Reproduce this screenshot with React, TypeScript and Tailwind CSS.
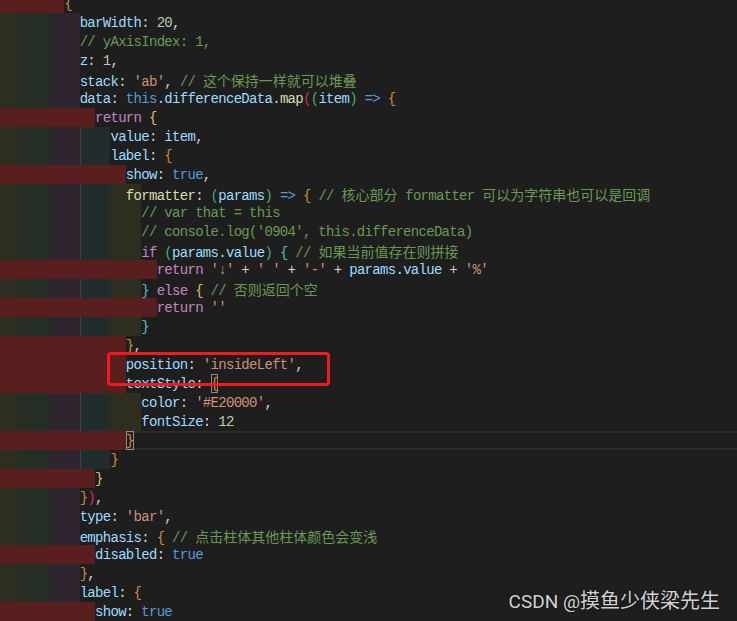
import React from "react";

type Tok = [string, string, boolean?];

const COL: Record<string, string> = {
  k: "text-[#9cdcfe]",
  p: "text-[#d4d4d4]",
  n: "text-[#b5cea8]",
  s: "text-[#ce9178]",
  c: "text-[#6a9955]",
  b: "text-[#569cd6]",
  f: "text-[#dcdcaa]",
  kw: "text-[#c586c0]",
  o: "text-[#d18b3a]",
  y: "text-[#e2c05b]",
  t: "text-[#4ec1c7]",
  g: "text-[#3db06b]",
  r: "text-[#d42a5a]",
};

const BAND = ["bg-[#2e2e20]", "bg-[#252e25]", "bg-[#2e252e]", "bg-[#212c2c] shadow-[inset_1px_0_0_#3a4444]", "bg-[#2e2e20]"];
const RED: Record<number, string> = {
  10: "w-[77px]",
  12: "w-[92.4px]",
  14: "w-[107.8px]",
  18: "w-[138.6px]",
  22: "w-[169.4px]",
};

type Line = { i: number; d: number | "r"; t: Tok[]; cur?: boolean };

const LINES: Line[] = [
  { i: 10, d: "r", t: [["{", "o"]] },
  { i: 12, d: 3, t: [["barWidth", "k"], [": ", "p"], ["20", "n"], [",", "p"]] },
  { i: 12, d: 3, t: [["// yAxisIndex: 1,", "c"]] },
  { i: 12, d: 3, t: [["z", "k"], [": ", "p"], ["1", "n"], [",", "p"]] },
  { i: 12, d: 3, t: [["stack", "k"], [": ", "p"], ["'ab'", "s"], [", ", "p"], ["// 这个保持一样就可以堆叠", "c"]] },
  {
    i: 12,
    d: 3,
    t: [
      ["data", "k"], [": ", "p"], ["this", "b"], [".", "p"], ["differenceData", "k"], [".", "p"], ["map", "f"],
      ["(", "r"], ["(", "g"], ["item", "k"], [")", "g"], [" ", "p"], ["=>", "b"], [" ", "p"], ["{", "o"],
    ],
  },
  { i: 14, d: "r", t: [["return", "kw"], [" ", "p"], ["{", "y"]] },
  { i: 16, d: 4, t: [["value", "k"], [": ", "p"], ["item", "k"], [",", "p"]] },
  { i: 16, d: 4, t: [["label", "k"], [": ", "p"], ["{", "o"]] },
  { i: 18, d: "r", t: [["show", "k"], [": ", "p"], ["true", "b"], [",", "p"]] },
  {
    i: 18,
    d: 5,
    t: [
      ["formatter", "f"], [": ", "p"], ["(", "g"], ["params", "k"], [")", "g"], [" ", "p"], ["=>", "b"], [" ", "p"],
      ["{", "o"], [" ", "p"], ["// 核心部分 formatter 可以为字符串也可以是回调", "c"],
    ],
  },
  { i: 20, d: 5, t: [["// var that = this", "c"]] },
  { i: 20, d: 5, t: [["// console.log('0904', this.differenceData)", "c"]] },
  {
    i: 20,
    d: 5,
    t: [
      ["if", "kw"], [" ", "p"], ["(", "g"], ["params", "k"], [".", "p"], ["value", "k"], [")", "g"], [" ", "p"],
      ["{", "t"], [" ", "p"], ["// 如果当前值存在则拼接", "c"],
    ],
  },
  {
    i: 22,
    d: "r",
    t: [
      ["return", "kw"], [" ", "p"], ["'↓'", "s"], [" + ", "p"], ["' '", "s"], [" + ", "p"], ["'-'", "s"], [" + ", "p"],
      ["params", "k"], [".", "p"], ["value", "k"], [" + ", "p"], ["'%'", "s"],
    ],
  },
  { i: 20, d: 5, t: [["}", "t"], [" ", "p"], ["else", "kw"], [" ", "p"], ["{", "y"], [" ", "p"], ["// 否则返回个空", "c"]] },
  { i: 22, d: "r", t: [["return", "kw"], [" ", "p"], ["''", "s"]] },
  { i: 20, d: 5, t: [["}", "t"]] },
  { i: 18, d: "r", t: [["}", "o"], [",", "p"]] },
  { i: 18, d: "r", t: [["position", "k"], [": ", "p"], ["'insideLeft'", "s"], [",", "p"]] },
  { i: 18, d: "r", t: [["textStyle", "k"], [": ", "p"], ["{", "o", true]] },
  { i: 20, d: 5, t: [["color", "k"], [": ", "p"], ["'#E20000'", "s"], [",", "p"]] },
  { i: 20, d: 5, t: [["fontSize", "k"], [": ", "p"], ["12", "n"]] },
  { i: 18, d: "r", cur: true, t: [["}", "o", true]] },
  { i: 16, d: 4, t: [["}", "o"]] },
  { i: 14, d: "r", t: [["}", "y"]] },
  { i: 12, d: 3, t: [["}", "o"], [")", "r"], [",", "p"]] },
  { i: 12, d: 3, t: [["type", "k"], [": ", "p"], ["'bar'", "s"], [",", "p"]] },
  { i: 12, d: 3, t: [["emphasis", "k"], [": ", "p"], ["{", "o"], [" ", "p"], ["// 点击柱体其他柱体颜色会变浅", "c"]] },
  { i: 14, d: "r", t: [["disabled", "k"], [": ", "p"], ["true", "b"]] },
  { i: 12, d: 3, t: [["}", "o"], [",", "p"]] },
  { i: 12, d: 3, t: [["label", "k"], [": ", "p"], ["{", "o"]] },
  { i: 14, d: "r", t: [["show", "k"], [": ", "p"], ["true", "b"]] },
];

const CJK = /([\u3000-\u9fff\uff00-\uffef]+)/;

function Txt({ s }: { s: string }) {
  const parts = s.split(CJK);
  return (
    <>
      {parts.map((p, i) =>
        CJK.test(p) ? (
          <span key={i} className="tracking-normal font-['Noto_Sans_CJK_SC',sans-serif] text-[14px] leading-[19px]">
            {p}
          </span>
        ) : (
          <React.Fragment key={i}>{p}</React.Fragment>
        )
      )}
    </>
  );
}

function Row({ line }: { line: Line }) {
  return (
    <div
      className={
        "grid h-[19px] " + (line.cur ? "shadow-[inset_0_2px_0_#2b2b2b,inset_0_-2px_0_#2b2b2b]" : "")
      }
    >
      <div className="[grid-area:1/1] flex -ml-[12.8px] h-[19px]">
        {line.d === "r" ? (
          <div className={"h-[19px] bg-[#591f1f] " + RED[line.i]} />
        ) : (
          BAND.slice(0, line.d).map((c, k) => <div key={k} className={"h-[19px] w-[30.8px] shrink-0 " + c} />)
        )}
      </div>
      <div className="[grid-area:1/1] -ml-[12.8px] whitespace-pre leading-[19px] h-[19px] pt-[1px]">
        <span>{" ".repeat(line.i)}</span>
        {line.t.map(([s, c, box], k) => (
          <span
            key={k}
            className={
              COL[c] + (box ? " inline-block h-[19px] -mt-[1px] shadow-[inset_0_0_0_1px_#8a8a8a] align-top pt-[1px]" : "")
            }
          >
            <Txt s={s} />
          </span>
        ))}
      </div>
    </div>
  );
}

export default function App() {
  return (
    <div className="relative w-[737px] h-[621px] overflow-hidden bg-[#1e1e1e] font-['Liberation_Mono','Noto_Sans_CJK_SC',monospace] text-[14px] tracking-[-0.7px] text-[#d4d4d4]">
      <div className="-mt-[6px] flex flex-col">
        {LINES.map((l, i) => (
          <Row key={i} line={l} />
        ))}
      </div>
      <div className="absolute left-[107px] top-[352px] w-[223px] h-[34px] border-[3px] border-[#f01c1c] rounded-[4px]" />
      <div className="absolute right-[17px] top-[590px] leading-[20px] whitespace-nowrap text-[#d2d2d2] tracking-normal [text-shadow:0_0_2px_rgba(0,0,0,0.6)]">
        <span className="font-['Roboto',sans-serif] text-[19px]">CSDN @</span>
        <span className="font-['Noto_Sans_CJK_SC',sans-serif] text-[20px]">摸鱼少侠梁先生</span>
      </div>
    </div>
  );
}
